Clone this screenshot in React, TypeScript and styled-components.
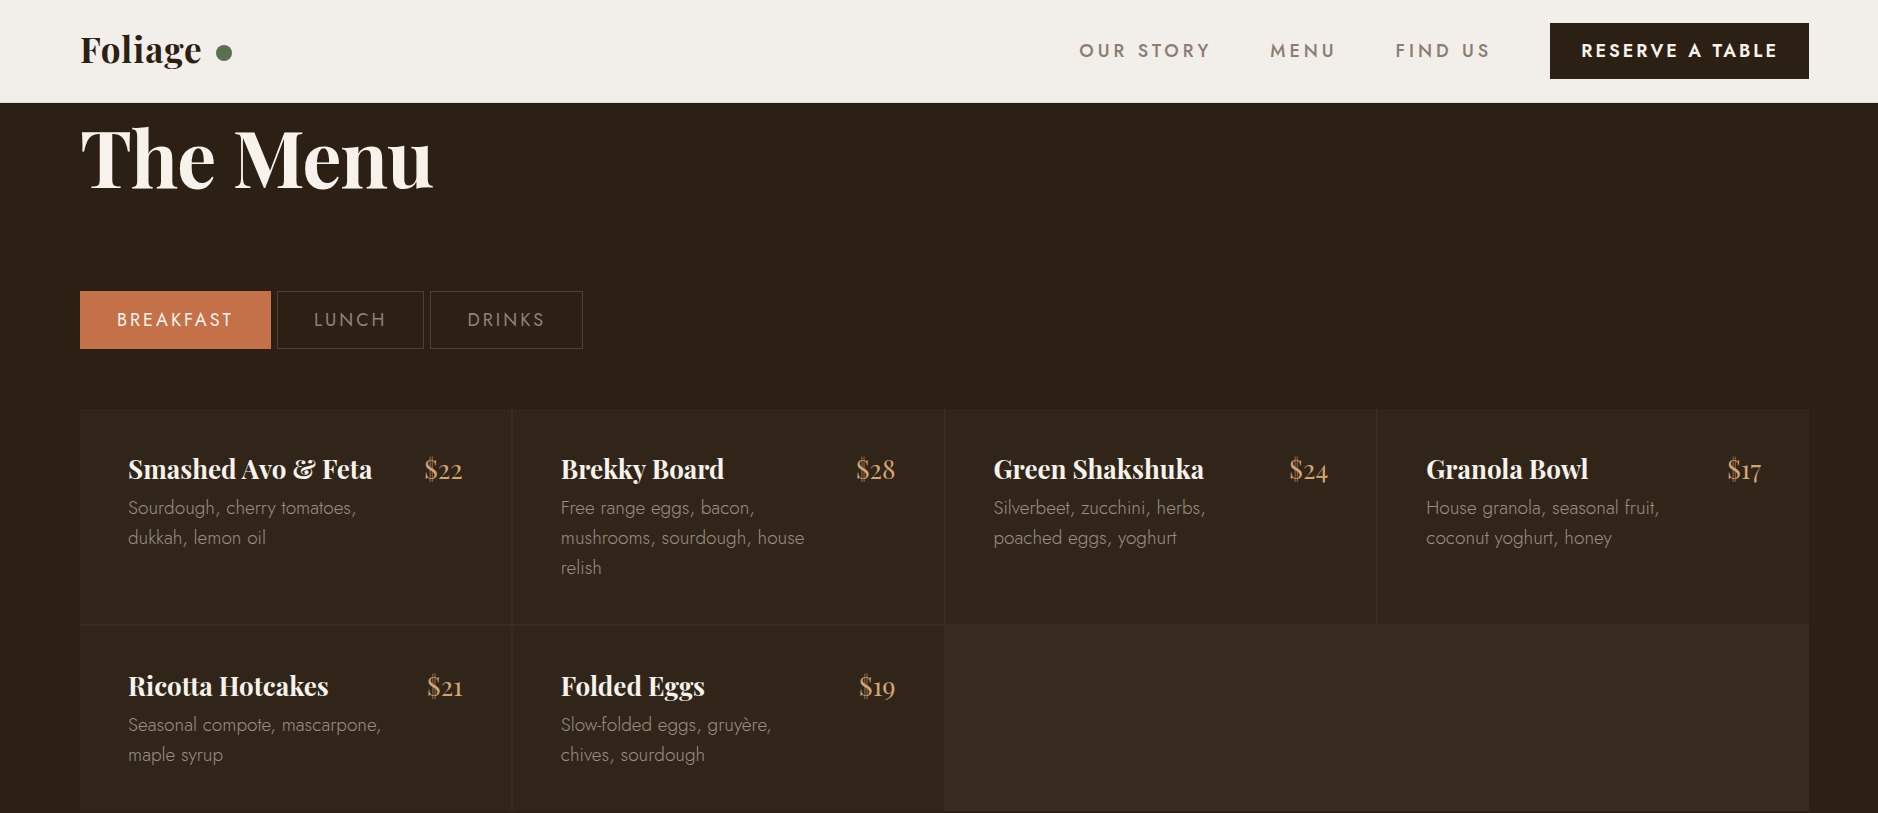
import React, { useState } from "react";
import styled, { createGlobalStyle } from "styled-components";

const serif = `"Playfair Display", "Liberation Serif", serif`;
const sans = `Jost, Lato, sans-serif`;

const GlobalStyle = createGlobalStyle`
  * { box-sizing: border-box; }
  html { background: #2c2014; }
  body { margin: 0; font-family: ${sans}; color: #f7f2ec; }
  h1, h2, p, ul { margin: 0; padding: 0; }
`;

const Header = styled.header`
  position: sticky;
  top: 0;
  z-index: 1;
  display: flex;
  align-items: center;
  justify-content: space-between;
  padding: 23px 69px 23px 80px;
  background: #f2eeea;
  border-bottom: 1px solid #e6ded6;
`;

const Logo = styled.a`
  display: flex;
  align-items: center;
  gap: 13px;
  padding-bottom: 4px;
  font-family: ${serif};
  font-size: 35px;
  line-height: 48px;
  font-weight: 700;
  letter-spacing: 1px;
  color: #2c2014;
  text-decoration: none;
`;

const Dot = styled.span`
  width: 16px;
  height: 16px;
  margin-top: 8px;
  border-radius: 50%;
  background: #5a7050;
`;

const Nav = styled.nav`
  display: flex;
  align-items: center;
  gap: 58px;
`;

const NavLink = styled.a`
  font-size: 18px;
  line-height: 24px;
  font-weight: 500;
  letter-spacing: 4px;
  text-transform: uppercase;
  text-decoration: none;
  color: #8b7d72;
`;

const ReserveButton = styled.button`
  padding: 16px 30px 16px 31px;
  border: 0;
  background: #2c2014;
  color: #f7f2ec;
  font-family: ${sans};
  font-size: 18px;
  line-height: 24px;
  font-weight: 600;
  letter-spacing: 3px;
  text-transform: uppercase;
`;

const Main = styled.main`
  padding: 10px 69px 0 80px;
`;

const Title = styled.h1`
  font-family: ${serif};
  font-size: 78px;
  line-height: 86px;
  font-weight: 700;
  letter-spacing: -1px;
`;

const Tabs = styled.div`
  display: flex;
  gap: 6px;
  margin: 92px 0 60px;
`;

const Tab = styled.button<{ $active: boolean }>`
  padding: 16px 36px;
  border: 1px solid ${(p) => (p.$active ? "#c4714a" : "#4b4037")};
  background: ${(p) => (p.$active ? "#c4714a" : "transparent")};
  color: ${(p) => (p.$active ? "#f7f2ec" : "#8f8378")};
  font-family: ${sans};
  font-size: 18px;
  line-height: 24px;
  font-weight: 400;
  letter-spacing: 3px;
  text-transform: uppercase;
`;

const Grid = styled.ul`
  display: grid;
  grid-template-columns: repeat(4, 1fr);
  gap: 2px;
  list-style: none;
  background: #382b22;
`;

const Card = styled.li`
  display: flex;
  align-items: flex-start;
  justify-content: space-between;
  gap: 32px;
  padding: 46px 48px 41px;
  background: #31251a;
`;

const Dish = styled.h2`
  margin-bottom: 10px;
  font-family: ${serif};
  font-size: 26px;
  line-height: 28px;
  font-weight: 700;
`;

const Description = styled.p`
  font-size: 19px;
  line-height: 30px;
  font-weight: 300;
  color: #9a8e82;
`;

const Price = styled.span`
  font-family: ${serif};
  font-size: 26px;
  line-height: 28px;
  color: #d4a574;
`;

type Item = { name: string; description: string; price: string };

const items: Item[] = [
  { name: "Smashed Avo & Feta", description: "Sourdough, cherry tomatoes, dukkah, lemon oil", price: "$22" },
  { name: "Brekky Board", description: "Free range eggs, bacon, mushrooms, sourdough, house relish", price: "$28" },
  { name: "Green Shakshuka", description: "Silverbeet, zucchini, herbs, poached eggs, yoghurt", price: "$24" },
  { name: "Granola Bowl", description: "House granola, seasonal fruit, coconut yoghurt, honey", price: "$17" },
  { name: "Ricotta Hotcakes", description: "Seasonal compote, mascarpone, maple syrup", price: "$21" },
  { name: "Folded Eggs", description: "Slow-folded eggs, gruyère, chives, sourdough", price: "$19" },
];

const sections = ["Breakfast", "Lunch", "Drinks"];

export default function App() {
  const [active, setActive] = useState("Breakfast");
  return (
    <>
      <GlobalStyle />
      <Header>
        <Logo href="#">
          Foliage
          <Dot />
        </Logo>
        <Nav>
          <NavLink href="#story">Our Story</NavLink>
          <NavLink href="#menu">Menu</NavLink>
          <NavLink href="#find">Find Us</NavLink>
          <ReserveButton type="button">Reserve a Table</ReserveButton>
        </Nav>
      </Header>
      <Main id="menu">
        <Title>The Menu</Title>
        <Tabs role="tablist">
          {sections.map((name) => (
            <Tab
              key={name}
              type="button"
              role="tab"
              aria-selected={active === name}
              $active={active === name}
              onClick={() => setActive(name)}
            >
              {name}
            </Tab>
          ))}
        </Tabs>
        <Grid>
          {items.map((item) => (
            <Card key={item.name}>
              <div>
                <Dish>{item.name}</Dish>
                <Description>{item.description}</Description>
              </div>
              <Price>{item.price}</Price>
            </Card>
          ))}
        </Grid>
      </Main>
    </>
  );
}
